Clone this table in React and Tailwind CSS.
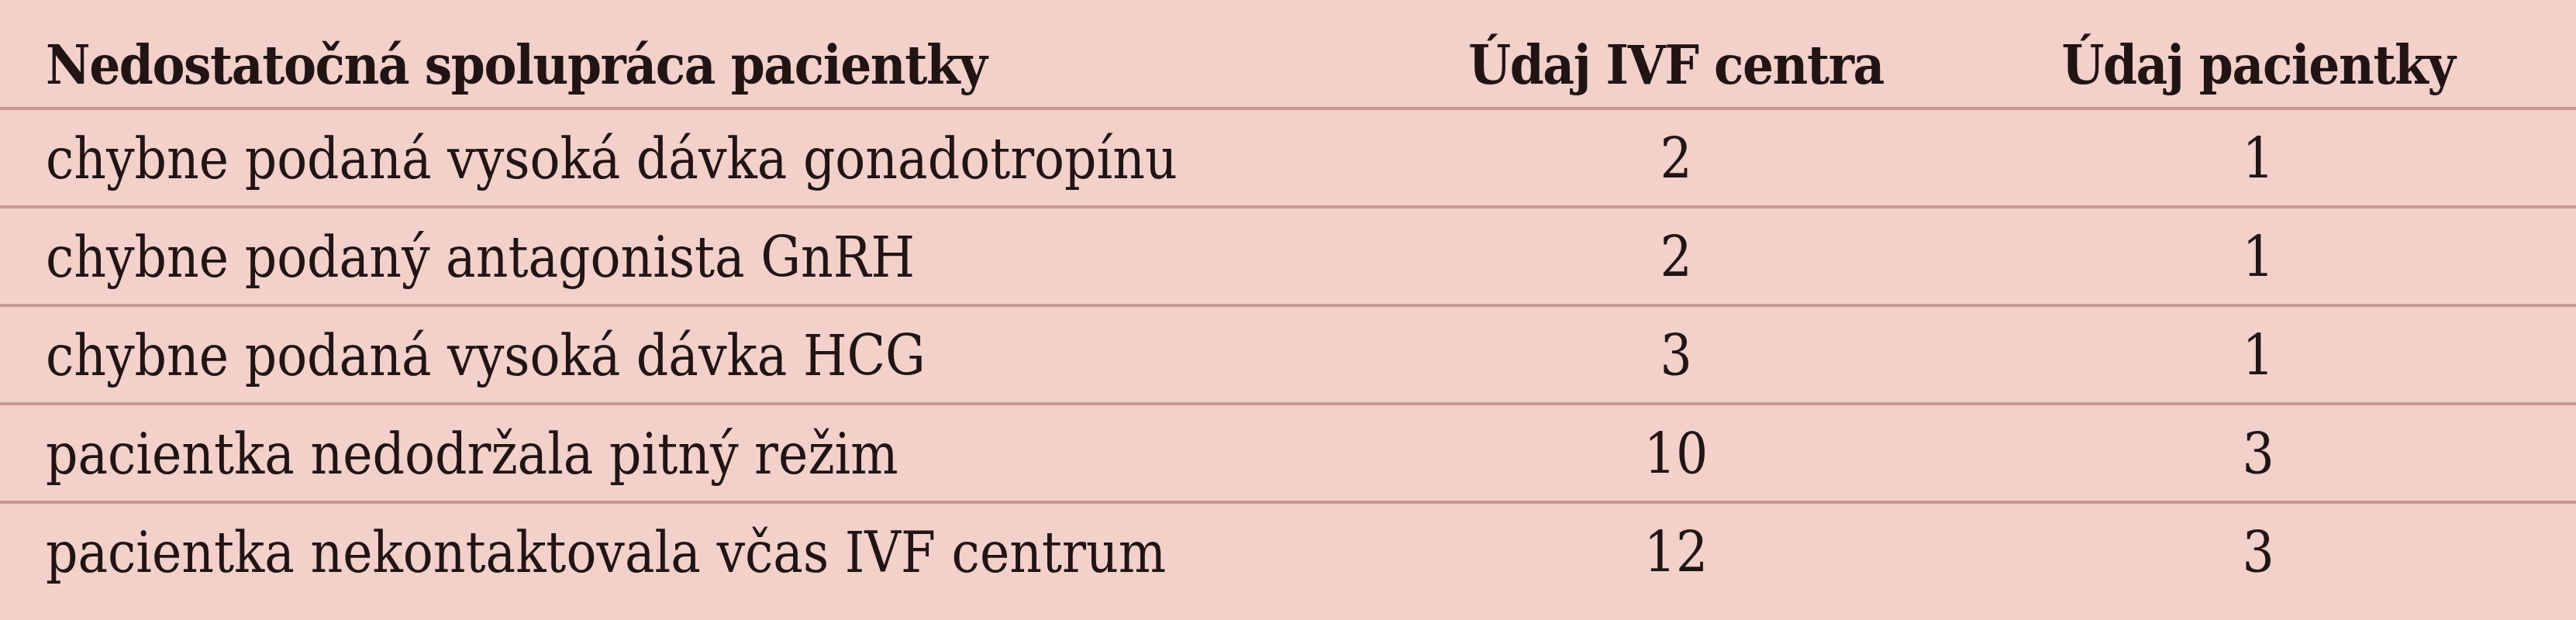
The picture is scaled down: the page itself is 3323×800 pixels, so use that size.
import React from 'react'

const rows = [
  ['chybne podaná vysoká dávka gonadotropínu', '2', '1'],
  ['chybne podaný antagonista GnRH', '2', '1'],
  ['chybne podaná vysoká dávka HCG', '3', '1'],
  ['pacientka nedodržala pitný režim', '10', '3'],
  ['pacientka nekontaktovala včas IVF centrum', '12', '3'],
]

const App = () => {
  return (
    <div className="w-[3323px] h-[800px] overflow-hidden bg-[#f2d1cb] text-[#231414] font-['DejaVu_Serif_Condensed','DejaVu_Serif',serif]">
      {/* header */}
      <div className="grid grid-cols-[1790px_744px_758px] h-[142px] border-b-4 border-[#c69995] font-bold text-[70px] leading-none tracking-[-0.02em]">
        <div className="pl-[59px] pt-[49px]">Nedostatočná spolupráca pacientky</div>
        <div className="pt-[49px] text-center">Údaj IVF centra</div>
        <div className="pt-[49px] text-center">Údaj pacientky</div>
      </div>

      {/* rows */}
      {rows.map((r, i) => (
        <div
          key={i}
          className={`grid grid-cols-[1790px_744px_758px] text-[72px] leading-none ${i < rows.length - 1 ? 'h-[127px] border-b-4 border-[#c69995]' : 'h-[150px]'}`}
        >
          <div className="pl-[59px] pt-[27px]">{r[0]}</div>
          <div className="pt-[27px] text-center">{r[1]}</div>
          <div className="pt-[27px] text-center">{r[2]}</div>
        </div>
      ))}
    </div>
  )
}

export default App
